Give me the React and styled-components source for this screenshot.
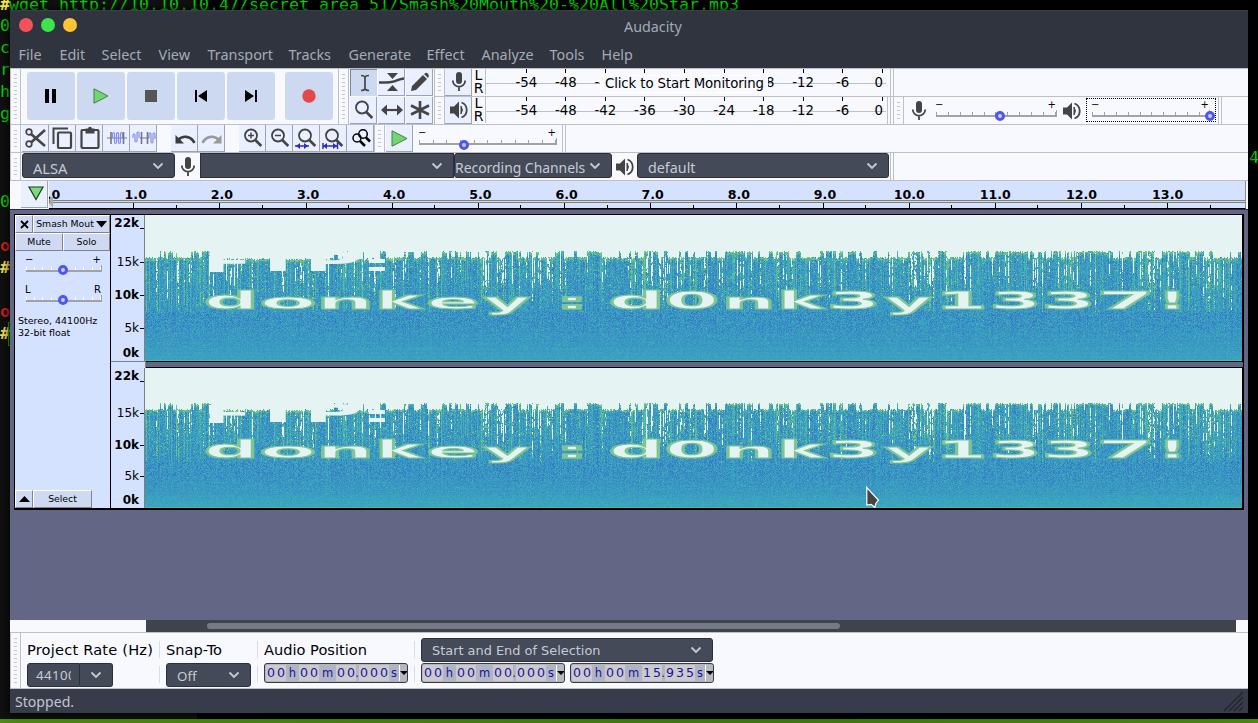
import React, { useLayoutEffect, useRef } from 'react';
import styled, { createGlobalStyle, css } from 'styled-components';

const C = {
  chrome: '#2f343f', face: '#f8f9ff', line: '#bfc0c2', button: '#eaf0ff', blue: '#cdd9f1',
  ruler: '#d5e2ff', combo: '#444a58', canvas: '#646685', ink: '#444',
};
const dejavu = '"DejaVu Sans", sans-serif';
const noto = '"Noto Sans", sans-serif';

const Global = createGlobalStyle`
  * { box-sizing: border-box; }
  body { margin: 0; background: #0b0b0b; overflow: hidden; font-family: ${dejavu}; }
  svg, canvas { display: block; }
`;

/* ---------- desktop and terminal ---------- */
const Desktop = styled.div`
  position: relative; width: 1258px; height: 723px; overflow: hidden;
  background: linear-gradient(90deg, #101010 0, #101010 197px, #000 197px);
`;
const TermLine = styled.div`
  position: absolute; left: ${p => p.$x || 0}px; top: ${p => p.$y}px;
  font: ${p => (p.$b ? 'bold ' : '')}16.61px/22px "DejaVu Sans Mono", monospace;
  color: ${p => p.$c || '#00d400'}; white-space: pre;
`;
const TermCursor = styled.div`
  position: absolute; left: 8px; top: 322px; width: 10px; height: 24px; border: 1px solid #00c800;
`;
const TmuxBar = styled.div`
  position: absolute; left: 0; top: 719px; width: 1258px; height: 4px;
  background: linear-gradient(90deg, #4e8c06, #3f7a04 60%, #4b8a06);
`;
const Window = styled.div`
  position: absolute; left: 10px; top: 10px; width: 1238px; height: 703px;
  display: flex; flex-direction: column; background: ${C.face};
  box-shadow: 0 0 8px #000;
`;

/* ---------- title and menu ---------- */
const TitleBar = styled.div`
  height: 30px; background: ${C.chrome}; border-top: 1px solid #3a3f4b;
  display: flex; align-items: center; padding: 0 9px 0; flex: none;
`;
const Dots = styled.div`display: flex; gap: 8px; width: 605px; margin-top: -1px;`;
const Dot = styled.span`width: 14px; height: 14px; border-radius: 50%; background: ${p => p.$c};`;
const Title = styled.div`font: 14.3px ${noto}; color: #a4abb7; margin-top: 2px;`;
const MenuBar = styled.div`
  height: 28px; background: ${C.chrome}; display: flex; align-items: center;
  padding-left: 8.5px; flex: none;
`;
const MenuItem = styled.div`width: ${p => p.$w}px; font: 14.4px ${noto}; color: #a4abb7; margin-top: 0;`;

/* ---------- toolbars ---------- */
const Dock = styled.div`display: flex; flex-direction: column; flex: none;`;
const Row = styled.div`
  display: flex; height: ${p => p.$h}px; border-top: ${p => (p.$plain ? 0 : 1)}px solid ${C.line};
`;
const Stack = styled.div`display: flex; flex-direction: column; width: ${p => p.$w}px;`;
const Grip = styled.div`
  width: 11px; flex: none; border-right: 1px solid ${C.line}; border-left: 1px solid ${C.line};
  padding: 5px 3px 3px 3px;
  &::before {
    content: ''; display: block; height: 100%;
    background: repeating-linear-gradient(180deg, #c6c6c6 0 1px, transparent 1px 4px);
  }
`;
const Bar = styled.div`display: flex; width: ${p => p.$w}px; flex: none;`;
const Group = styled.div`
  display: flex; flex-wrap: wrap; align-content: flex-start;
  gap: ${p => p.$gap || 0}px; padding: ${p => p.$pad || 0}; flex: none; width: ${p => p.$w ? p.$w + 'px' : 'auto'};
`;
const Spacer = styled.div`width: ${p => p.$w}px; flex: none;`;
const BarEnd = styled.div`
  width: 4px; flex: none; border-left: 1px solid ${C.line}; border-right: 1px solid ${C.line};
`;
const BigButton = styled.div`
  width: 48px; height: 48px; border-radius: 3px; background: ${C.blue}; flex: none;
  display: grid; place-items: center; margin-left: ${p => p.$ml || 0}px;
`;
const ToolButton = styled.div`
  width: 27px; height: 27px; background: ${p => (p.$on ? '#cdd9f1' : C.button)}; flex: none;
  border: 0 solid ${p => (p.$on ? '#808792' : '#9da3b2')};
  border-width: ${p => (p.$on ? '1px 0 0 1px' : '0 1px 1px 0')};
  padding: 0 0 0 1px;
  display: grid; place-items: center; overflow: hidden;
`;

/* ---------- meters ---------- */
const MeterRow = styled.div`display: flex; height: 28px; border-top: ${p => (p.$first ? 0 : 1)}px solid ${C.line};`;
const LR = styled.div`
  width: 13px; display: flex; flex-direction: column; align-items: center; font-size: 14px; line-height: 13px;
`;
const Meter = styled.div`
  position: relative; display: flex; width: 401px; height: 26px; padding-left: 20.5px;
  border-left: 1px solid ${C.line}; flex: none;
  background: linear-gradient(${C.line}, ${C.line}) 0 14px / 401px 1px no-repeat;
`;
const MeterCell = styled.div`
  width: ${p => p.$w || 39.55}px; flex: none; display: flex; flex-direction: column; align-items: ${p => (p.$w ? 'flex-end' : 'center')};
  font-size: 13.3px; line-height: 20px; color: #000;
  &::before { content: ''; width: 1px; height: 4px; background: #000; margin-bottom: 0; }
`;
const Monitoring = styled.div`
  position: absolute; left: 114px; top: 6px; width: 168px; height: 18px; background: ${C.face};
  border: 1px solid #fff; font-size: 13.3px; line-height: 15px; padding-left: 4px; white-space: nowrap; letter-spacing: -.1px;
`;

/* ---------- sliders ---------- */
const SliderBox = styled.div`
  position: relative; width: ${p => p.$w}px; height: ${p => p.$h || 22}px; margin: ${p => p.$m || 0};
  outline: ${p => (p.$focus ? '1px dotted #000' : 'none')}; outline-offset: 0;
  flex: none; padding: 0 ${p => (p.$focus ? 5 : 0)}px;
`;
const SliderEnds = styled.div`
  display: flex; justify-content: space-between; padding: 0 1px 0 0; height: 11px; font: 10px/11px ${dejavu};
  margin-left: -1px;
`;
const SliderTrack = styled.div`
  height: 7px; border-bottom: 2px solid #a2a2a2; border-right: 1px solid #a2a2a2;
  background: repeating-linear-gradient(90deg, ${p => p.$tick || '#a2a2a2'} 0 1px, transparent 1px ${p => p.$step}px) 0 2px no-repeat;
`;
const Knob = styled.div`
  position: absolute; left: ${p => p.$x}px; bottom: ${p => p.$b}px; width: 10px; height: 10px;
  border-radius: 50%; border: 3.5px solid #4b57f0; background: #ccc;
`;
function Slider({ w, knob, step, m, h, focus, ends = ['−', '+'], tick, b = 0 }) {
  return (
    <SliderBox $w={w} $h={h} $m={m} $focus={focus}>
      <SliderEnds><span>{ends[0]}</span><span>{ends[1]}</span></SliderEnds>
      <SliderTrack $step={step} $tick={tick} />
      <Knob $x={knob} $b={b} />
    </SliderBox>
  );
}

/* ---------- combos ---------- */
const ComboBox = styled.div`
  width: ${p => p.$w}px; height: ${p => p.$h || 25}px; background: ${C.combo}; border: 1px solid #2b2f3a;
  border-radius: ${p => p.$r ?? 3}px; display: flex; align-items: center; justify-content: space-between;
  padding: ${p => p.$pad || '0 10px 0 10px'}; color: #c6cbd6; font: ${p => p.$fs || 14.67}px ${p => p.$ff || noto}; flex: none;
  white-space: nowrap;
  & > span { padding-top: ${p => p.$pt ?? 4}px; }
`;
const Chevron = () => (
  <svg width="12" height="8" viewBox="0 0 12 8"><path d="M1.5 1.5 6 6l4.5-4.5" fill="none" stroke="#c6cbd6" strokeWidth="1.8" /></svg>
);
const IconCell = styled.div`width: ${p => p.$w}px; display: grid; place-items: center; flex: none;`;

/* ---------- timeline ---------- */
const Timeline = styled.div`display: flex; height: 29px; border-top: 1px solid ${C.line}; flex: none;`;
const TimeRuler = styled.div`
  position: relative; display: flex; width: 1197px; height: 28px; overflow: hidden; border-right: 1px solid #8b8d92; border-bottom: 1px solid #000;
  background:
    linear-gradient(#808080, #808080) 0 19px / 100% 1px no-repeat,
    linear-gradient(#d9d9d4, #d9d9d4) 0 20px / 100% 1px no-repeat,
    linear-gradient(#808080, #808080) 0 21px / 100% 1px no-repeat,
    ${C.ruler};
`;
const TimeCell = styled.div`
  width: 86.16px; flex: none; display: flex; flex-direction: column; align-items: center;
  justify-content: space-between; font: bold 12.6px/14px ${dejavu}; padding-top: 7px;
  background: linear-gradient(#000, #000) 100% 100% / 1px 3px no-repeat;
  & > span { padding-left: ${p => (p.$wide ? 0 : 4)}px; }
  &::after { content: ''; width: 1px; height: 5px; background: #000; }
`;
const TimeStart = styled.div`
  width: 41.7px; flex: none; display: flex; font: bold 12.6px/14px ${dejavu}; padding-top: 7px;
  & > span { margin-left: -11px; }
`;
const ScrubMark = styled.div`
  position: absolute; left: 0; bottom: 0; width: 4px; height: 13px; background: #aaa; border-left: 1px solid #777;
  clip-path: polygon(100% 0, 100% 100%, 0 60%, 0 40%);
`;

/* ---------- tracks ---------- */
const Workspace = styled.div`height: 411px; background: ${C.canvas}; border-top: 1px solid #2b2b38; padding: 4px 4px; flex: none;`;
const Track = styled.div`
  display: flex; width: 1230px; height: 296px; border: 1px solid #000; border-width: 1px 2px 2px 1px; background: ${C.canvas};
`;
const TrackPanel = styled.div`width: 96px; background: ${C.ruler}; border-right: 1px solid #000; display: flex; flex-direction: column;`;
const PanelRow = styled.div`display: flex; height: ${p => p.$h || 18}px; margin-top: ${p => p.$mt || 0}px; flex: none;`;
const PanelButton = styled.div`
  width: ${p => p.$w}px; background: #cfdaf2; border: solid; border-width: 1px; border-color: #fff #80838c #80838c #fff;
  font: 9.3px/16px ${dejavu}; display: flex; align-items: center; justify-content: center; gap: 2px; white-space: nowrap;
`;
const TrackInfo = styled.div`font: 9.5px/12px ${dejavu}; padding: 13px 0 0 3px; white-space: nowrap; flex: 1;`;
const Channels = styled.div`display: flex; flex-direction: column;`;
const Channel = styled.div`
  display: flex; height: ${p => p.$h}px;
`;
const Divider = styled.div`
  display: flex; height: 7px;
  &::before { content: ''; width: 34px; background: ${C.ruler}; border-top: 1px solid #808080; border-right: 1px solid #808080; }
  &::after { content: ''; width: 1097px; border: 1px solid #000; border-width: 1px 0; background: ${C.canvas}; }
`;
const FreqRuler = styled.div`
  width: 34px; background: ${C.ruler}; border-right: 1px solid #808080; display: flex; flex-direction: column; overflow: hidden;
`;
const FreqMark = styled.div`
  display: flex; justify-content: flex-end; gap: 1px; margin-top: ${p => p.$mt}px; height: 12px; flex: none;
  font: ${p => (p.$bold ? 'bold' : 'normal')} 12px/12px ${dejavu};
  &::after { content: ''; width: 4px; height: 1px; margin-top: ${p => p.$tick}px; background: ${p => (p.$tick ? '#000' : 'transparent')}; }
`;
const PlotFrame = styled.div`position: relative; width: 1097px; height: ${p => p.$h}px;`;
const Overlay = styled.svg`position: absolute; left: 0; top: 0;`;

const marks = [
  ['22k', 1, 11], ['15k', 0, 6], ['10k', 1, 6], ['5k', 0, 6], ['0k', 1, 0],
];

/* Glyph cells of the message: character, left and right edge in px, baseline,
   height scale, and the ink extent of the glyph in thousandths of an em. */
const ink = {
  d: [46, 626], o: [46, 641], n: [84, 633], k: [84, 671], e: [46, 639], y: [12, 639], ':': [112, 288],
  '0': [46, 650], '3': [46, 643], '1': [117, 642], '7': [65, 637], '!': [135, 316], F: [92, 590], T: [5, 677], P: [92, 690],
};
const message = [
  ['d', 207, 252, 309, 1], ['o', 263, 313, 309, .88], ['n', 323, 368, 309, .88], ['k', 381, 423, 309, 1],
  ['e', 430, 477, 309, .88], ['y', 484, 530, 309.5, .9], [':', 565, 579, 309, .88], ['d', 612, 658, 309, 1],
  ['0', 668, 716, 309, 1], ['n', 728, 770, 309, .88], ['k', 783, 825, 309, 1], ['3', 830, 877, 309, 1],
  ['y', 885, 932, 309.5, .9], ['1', 944, 984, 309, 1], ['3', 993, 1038, 309, 1], ['3', 1045, 1092, 309, 1],
  ['7', 1102, 1150, 309, 1], ['!', 1166, 1178, 309, 1],
];
const heading = [['F', 210, 246, 272, 1.05], ['T', 250, 306, 271, 1.05], ['P', 311, 358, 271, 1.05], [':', 369, 385, 271, .86]];

function Spectrogram({ h }) {
  const ref = useRef(null);
  useLayoutEffect(() => {
    const W = 1097;
    const ctx = ref.current.getContext('2d');
    const img = ctx.createImageData(W, h);
    let s = 4711;
    const rnd = () => {
      s = (s + 0x6d2b79f5) | 0;
      let t = Math.imul(s ^ (s >>> 15), 1 | s);
      t = (t + Math.imul(t ^ (t >>> 7), 61 | t)) ^ t;
      return ((t ^ (t >>> 14)) >>> 0) / 4294967296;
    };
    const stops = [[50, 108, 200], [57, 142, 196], [60, 168, 190], [76, 184, 168], [130, 202, 112], [229, 243, 243]];
    const shade = v => {
      const x = Math.max(0, Math.min(4, v));
      const i = Math.min(3, Math.floor(x));
      const f = x - i;
      return stops[i].map((a, k) => a + (stops[i + 1][k] - a) * f);
    };
    const k = h / 146;
    const cols = [];
    let on = false;
    let hot = .3;
    let hotNext = .3;
    for (let x = 0; x < W; x++) {
      const quiet = x > 62 && x < 240;
      if (rnd() < .42) on = rnd() < (quiet ? .16 : .5);
      if (rnd() < .06) hotNext = rnd();
      hot += (hotNext - hot) * .3;
      cols.push({
        spike: on,
        top: (on ? 36 : 42 + (quiet ? rnd() * 2 : 0)) + Math.floor(rnd() * 2.2),
        green: rnd() < .14 + hot * .3 ? .4 + rnd() * 1.3 : 0,
        gap: rnd() < .06 + hot * .26 ? .25 + rnd() * .75 : 0,
        len: 60 + rnd() * 40,
        tone: (rnd() - .45) * .7,
        broken: 0,
      });
    }
    for (let y = 0; y < h; y++) {
      const yy = y / k;
      const streak = (rnd() - .5) * .45;
      for (let x = 0; x < W; x++) {
        const c = cols[x];
        let rgb;
        if (yy < c.top) rgb = stops[5];
        else if (yy < 97) {
          const fade = yy < c.len ? 1 : .3 * Math.max(.3, (97 - yy) / 37);
          let v = .4 + rnd() * 1.8 + c.tone + c.green * fade * (.5 + rnd() * .8);
          if (yy < c.top + 2.5 && rnd() < .75) v += 1.9;
          if (rnd() < .05 * fade) v = 3.8;
          rgb = shade(v);
          if (c.gap) {
            if (rnd() < .4) c.broken = rnd() < (yy < 68 ? c.gap * .8 : c.gap * .2);
            if (c.broken && yy < c.len - 4) rgb = stops[5];
            else if (yy < c.len && rnd() < .4) rgb = shade(3.7);
          }
        } else {
          const t = Math.max(0, (yy - 97) / 49);
          const amp = 2.1 * (1 - t * .72);
          let v = 1.2 + t * .72 - .2 * Math.sin(t * 3.14) + (rnd() - .5) * amp + streak * t + c.tone * (1 - t) * .7;
          if (rnd() < .018 * (1 - t)) v = 3.1;
          if (y === h - 1) v = 3;
          rgb = shade(v);
        }
        const o = (y * W + x) * 4;
        img.data[o] = rgb[0]; img.data[o + 1] = rgb[1]; img.data[o + 2] = rgb[2]; img.data[o + 3] = 255;
      }
    }
    ctx.putImageData(img, 0, 0);
  }, [h]);
  const size = 25;
  const glyph = ([ch, x0, x1, base, sy], i) => {
    const [a, b] = ink[ch];
    const sx = (x1 - x0) / ((b - a) / 1000 * size);
    return (
      <text
        key={i}
        strokeWidth={ch === ':' ? 1.9 : 1.1}
        transform={`translate(${x0 - a / 1000 * size * sx} ${base}) scale(${sx} ${sy})`}
      >{ch}</text>
    );
  };
  return (
    <PlotFrame $h={h}>
      <canvas ref={ref} width={1097} height={h} />
      <Overlay width="1097" height={h} viewBox="145 215 1097 146" preserveAspectRatio="none">
        <g fontFamily="DejaVu Sans" fontWeight="bold" fontSize={size} fill="#e5f3f3">
          {heading.map(glyph)}
          <g stroke="#7fc493">{message.map(glyph)}</g>
        </g>
      </Overlay>
    </PlotFrame>
  );
}

/* ---------- bottom ---------- */
const ScrollRow = styled.div`display: flex; height: 12px; flex: none;`;
const ScrollTrack = styled.div`width: 1090px; margin-left: 136px; background: #3f434e; padding: 3px 0 3px 61px;`;
const ScrollThumb = styled.div`width: 633px; height: 6px; border-radius: 3px; background: #767a85;`;
const SelectionBar = styled.div`display: flex; height: 57px; border: 1px solid ${C.line}; border-width: 1px 0; flex: none;`;
const Field = styled.div`
  width: ${p => p.$w}px; padding: ${p => p.$pad || '7px 0 0 6px'}; display: flex; flex-direction: column; gap: ${p => p.$gap ?? 3}px; flex: none;
`;
const FieldLabel = styled.div`font: 14.6px/20px ${dejavu}; white-space: nowrap; letter-spacing: ${p => p.$ls || 0}px;`;
const VRule = styled.div`
  width: 1px; margin: 8px 0 5px; background: linear-gradient(#dcdde2 0 17px, transparent 17px 25px, #dcdde2 25px);
`;
const RateBox = styled.div`display: flex;`;
const RateText = styled.div`
  width: 53px; height: 24px; background: ${C.combo}; border: 1px solid #2b2f3a; border-radius: 3px 0 0 3px;
  color: #c6cbd6; font: 13.3px/22px ${noto}; overflow: hidden; padding-left: 8px;
  & > span { display: block; width: 35px; overflow: hidden; letter-spacing: .4px; }
`;
const RateArrow = styled.div`
  width: 33px; height: 24px; background: ${C.combo}; border: 1px solid #2b2f3a; border-left: 0; border-radius: 0 3px 3px 0;
  display: grid; place-items: center;
`;
const TimeRow = styled.div`display: flex; gap: 5px; `;
const TimeBox = styled.div`
  display: flex; width: 144px; height: 20px; border: 1px solid #3a3a40; border-radius: 3px; background: #b1b4c1;
  padding: 1px 0 1px 1px; color: #1c10a8; font: 12.6px/16px ${dejavu}; overflow: hidden;
`;
const Digit = styled.span`width: 10px; background: #cbcbcb; text-align: center; flex: none;`;
const Unit = styled.span`width: ${p => p.$w}px; text-align: center; flex: none; font-size: 11.5px; ${p => p.$dot && css`text-indent: -1px;`}`;
const TimeArrow = styled.span`
  flex: 1; background: #b6b8c4; border-left: 1px solid #fff; display: grid; place-items: center;
`;
function TimeField({ value }) {
  const units = { h: 13, m: 17, '.': 3, s: 10 };
  return (
    <TimeBox>
      {[...value].map((ch, i) => (units[ch] ? <Unit key={i} $w={units[ch]} $dot={ch === '.'}>{ch}</Unit> : <Digit key={i}>{ch}</Digit>))}
      <TimeArrow><svg width="8" height="4"><path d="M0 0h8L4 4z" /></svg></TimeArrow>
    </TimeBox>
  );
}
const StatusBar = styled.div`
  height: 24px; flex: none; background: #383c4a; color: #c0c6d2; font: 14.1px/24px ${noto}; padding: 1px 4px 0 5px;
  display: flex; justify-content: space-between; align-items: flex-start; overflow: hidden;
`;
const Pointer = styled.svg`position: absolute; left: 866px; top: 486px;`;

/* ---------- icons ---------- */
const Ico = ({ s = 24, w, h, children }) => (
  <svg width={w || s} height={h || s} viewBox={`0 0 ${w || s} ${h || s}`} fill="none" stroke={C.ink} strokeWidth="2">{children}</svg>
);
const Mic = () => (
  <Ico w={16} h={22}><rect x="5" y="1" width="6" height="12" rx="3" fill="#444" stroke="none" /><path d="M1.8 9.5a6.2 6.2 0 0 0 12.4 0M8 15.5V20" strokeWidth="1.8" /></Ico>
);
const Speaker = () => (
  <Ico w={20} h={20}><path d="M1 6.500h4l5-5v17l-5-5H1z" fill="#444" stroke="none" /><path d="M12 6v8q2.800-4 0-8z" fill="#444" strokeWidth="1" /><path d="M12.5 2.5a8 8 0 0 1 0 15" strokeWidth="1.8" /></Ico>
);
const PlayTri = ({ s = 16 }) => (
  <Ico s={s}><path d={`M1 .8 L${s - 1} ${s / 2} L1 ${s - .8}z`} fill="#72d572" stroke="#4a7f45" strokeWidth="1" /></Ico>
);
const Lens = ({ children }) => (
  <Ico s={24}><circle cx="10" cy="9.5" r="6" strokeWidth="1.8" /><path d="m14.3 14 6 6" strokeWidth="2.6" />{children}</Ico>
);
const Wave = ({ inside }) => (
  <Ico s={24}>
    <path d={inside ? 'M2 12h20' : 'M8 12h9'} stroke="#8f9ae8" strokeWidth="1.500" />
    <path
      d={inside
        ? 'M7.500 12V7.500q1-2 2 0v9q1 2 2 0v-9q1-2 2 0v9q1 2 2 0v-9q1-2 2 0V12'
        : 'M1 12V9q1-2 2 0v6q1 2 2 0V7q1-2 2 0v5M17 12V8q1-2 2 0v8q1 2 2 0V8q1-2 2 0v5'}
      stroke="#8690e6" strokeWidth="1.200"
    />
    <path d={inside ? 'M6 6v12M18.500 6v12' : 'M9.500 6v12M15.500 6v12'} stroke="#777" strokeWidth="1.600" />
  </Ico>
);
const Scissors = () => (
  <Ico s={24}><circle cx="5" cy="6" r="2.8" strokeWidth="1.7" /><circle cx="5" cy="18" r="2.8" strokeWidth="1.7" /><path d="M7 8l14 12M7 16.5 21 4" strokeWidth="2.6" /></Ico>
);
const Copy = () => (
  <Ico s={24}><path d="M2.5 18V2.5H17" strokeWidth="2" /><rect x="7" y="6.5" width="13" height="15.5" rx="1" strokeWidth="2.200" /></Ico>
);
const Paste = () => (
  <Ico s={24}><rect x="3.5" y="4" width="17" height="18" rx="1" strokeWidth="2.200" /><path d="M7.5 2.5h9v5h-9z" fill="#444" stroke="none" /><circle cx="12" cy="2.8" r="2" fill="#444" stroke="none" /></Ico>
);
const Undo = ({ flip }) => (
  <Ico s={24}>
    <g transform={flip ? 'translate(24 0) scale(-1 1)' : undefined} stroke={flip ? '#999' : '#3b3b3b'}>
      <path d="M5 14c4.500-4.800 12.500-4.500 16.500 2.800" strokeWidth="2.6" />
      <path d="M2.500 9v8.500H11z" fill={flip ? '#999' : '#3b3b3b'} stroke="none" />
    </g>
  </Ico>
);

const menus = [['File', 41], ['Edit', 42], ['Select', 57], ['View', 49], ['Transport', 81], ['Tracks', 60], ['Generate', 78], ['Effect', 55], ['Analyze', 68], ['Tools', 52], ['Help', 40]];
const dbs = ['-54', '-48', '-42', '-36', '-30', '-24', '-18', '-12', '-6'];

function MeterScale({ monitoring }) {
  return (
    <Meter>
      {dbs.map(d => <MeterCell key={d}>{d}</MeterCell>)}
      <MeterCell $w={20.5}>0</MeterCell>
      {monitoring && <Monitoring>Click to Start Monitoring</Monitoring>}
    </Meter>
  );
}

export default function App() {
  return (
    <Desktop>
      <Global />
      <TermLine $y={-6} $c="#f5e44a" $b>#</TermLine>
      <TermLine $y={-6} $x={9}>wget http://10.10.10.47/secret_area_51/Smash%20Mouth%20-%20All%20Star.mp3</TermLine>
      {[['0', 15], ['c', 37], ['r', 59], ['h', 81], ['g', 103], ['0', 191]].map(([t, y]) => <TermLine key={y} $y={y}>{t}</TermLine>)}
      <TermLine $y={235} $c="#c81e1e" $b>o</TermLine>
      <TermLine $y={257} $c="#f0dc50" $b>#</TermLine>
      <TermLine $y={301} $c="#c81e1e" $b>o</TermLine>
      <TermLine $y={323} $c="#f0dc50" $b>#</TermLine>
      <TermCursor />
      <TermLine $y={147} $x={1249}>4</TermLine>
      <TmuxBar />
      <Window>
        <TitleBar>
          <Dots><Dot $c="#f5515a" /><Dot $c="#3be54b" /><Dot $c="#fdc435" /></Dots>
          <Title>Audacity</Title>
        </TitleBar>
        <MenuBar>{menus.map(([t, w]) => <MenuItem key={t} $w={w}>{t}</MenuItem>)}</MenuBar>

        <Dock>
          <Row $h={56}>
            <Bar $w={328}>
              <Grip />
              <Group $gap={2} $pad="3px 0 0 6px">
                <BigButton><Ico s={16}><path d="M2 1h4v14H2zM9 1h4v14H9z" fill="#000" stroke="none" /></Ico></BigButton>
                <BigButton><PlayTri /></BigButton>
                <BigButton><Ico s={12}><path d="M0 0h12v12H0z" fill="#555" stroke="none" /></Ico></BigButton>
                <BigButton><Ico s={14}><path d="M1 1h2v12H1zM13 1v12L4 7z" fill="#000" stroke="none" /></Ico></BigButton>
                <BigButton><Ico s={14}><path d="M11 1h2v12h-2zM1 1v12l9-6z" fill="#000" stroke="none" /></Ico></BigButton>
                <BigButton $ml={8}><Ico s={14}><circle cx="7" cy="7" r="6.7" fill="#e54848" stroke="none" /></Ico></BigButton>
              </Group>
            </Bar>
            <Bar $w={96}>
              <Grip />
              <Group $gap={1} $w={85} $pad="0 0 0 1px">
                <ToolButton $on><Ico s={20}><path d="M6 2.500q3 0 4 1.500Q11 2.500 14 2.500M6 17.500q3 0 4-1.500 1 1.500 4 1.500M10 4v12" strokeWidth="1.7" /></Ico></ToolButton>
                <ToolButton>
                  <Ico s={26}><path d="M8 4h11l-5.5 6zM8 22h11l-5.5-6z" fill="#444" stroke="none" /><path d="M0 13.500c8 0 10 .5 14-.8S20 10 25 9.500" strokeWidth="2.400" /></Ico>
                </ToolButton>
                <ToolButton><Ico s={20}><path d="M1 19l1-5L13 3l4 4L6 18zM14 2l1.500-1q1.500-.5 2.500.7t.8 2.500L18 6z" fill="#444" stroke="none" /></Ico></ToolButton>
                <ToolButton><Lens /></ToolButton>
                <ToolButton><Ico s={22}><path d="M4 11h14" strokeWidth="2.2" /><path d="M0 11l6-5.500v11zM22 11l-6-5.500v11z" fill="#444" stroke="none" /></Ico></ToolButton>
                <ToolButton><Ico s={20}><path d="M10 1v18M1 5.500l18 9M1 14.500l18-9" strokeWidth="2.6" /></Ico></ToolButton>
              </Group>
            </Bar>
            <Stack $w={453}>
              <MeterRow $first>
                <Grip /><ToolButton><Mic /></ToolButton><LR><span>L</span><span>R</span></LR><MeterScale monitoring />
              </MeterRow>
              <MeterRow>
                <Grip /><ToolButton><Speaker /></ToolButton><LR><span>L</span><span>R</span></LR><MeterScale />
              </MeterRow>
            </Stack>
            <Stack $w={361}>
              <Row $h={28} $plain><Spacer $w={3} /><BarEnd /></Row>
              <Row $h={28}>
                <BarEnd />
                <Spacer $w={2} />
                <Grip />
                <IconCell $w={30}><Mic /></IconCell>
                <Slider w={121} step={11.9} knob={59} m="2px 0 0 2px" b={0} />
                <IconCell $w={29}><Speaker /></IconCell>
                <Slider w={128} step={11.9} knob={118} m="2px 3px 0 1px" focus b={0} />
                <BarEnd />
              </Row>
            </Stack>
          </Row>

          <Row $h={28}>
            <Grip />
            <Group $pad="0 0 0 1px">
              <ToolButton><Scissors /></ToolButton>
              <ToolButton><Copy /></ToolButton>
              <ToolButton><Paste /></ToolButton>
              <ToolButton><Wave inside /></ToolButton>
              <ToolButton><Wave /></ToolButton>
            </Group>
            <Group $pad="0 0 0 14px">
              <ToolButton><Undo /></ToolButton>
              <ToolButton><Undo flip /></ToolButton>
            </Group>
            <Group $pad="0 0 0 14px">
              <ToolButton><Lens><path d="M7 9.500h6M10 6.500v6" strokeWidth="1.500" /></Lens></ToolButton>
              <ToolButton><Lens><path d="M7 9.500h6" strokeWidth="1.500" /></Lens></ToolButton>
              <ToolButton><Lens><path d="M0 20h14" stroke="#2c2cc8" strokeWidth="1.500" /><path d="M1 20l4-3v6zM13 20l-4-3v6z" fill="#2c2cc8" stroke="none" /></Lens></ToolButton>
              <ToolButton><Lens><path d="M1 20h14M1 17v6M15.500 17v6" stroke="#2c2cc8" strokeWidth="1.500" /><path d="M1 20l4-3v6zM15 20l-4-3v6z" fill="#2c2cc8" stroke="none" /></Lens></ToolButton>
              <ToolButton><Ico s={24}><g stroke="#000" strokeWidth="1.500"><circle cx="8" cy="12" r="4" /><circle cx="14" cy="8" r="4.300" /><path d="M11 15l5 5M17 11.500l4 4" strokeWidth="2.500" /></g></Ico></ToolButton>
            </Group>
            <Grip />
            <Group $pad="0 6px 0 1px"><ToolButton><PlayTri s={17} /></ToolButton></Group>
            <Slider w={138} step={13.65} knob={40} m="2px 5px 0 0" b={-1} />
            <BarEnd />
          </Row>

          <Row $h={28}>
            <Grip />
            <Spacer $w={1} />
            <ComboBox $w={153}><span>ALSA</span><Chevron /></ComboBox>
            <IconCell $w={25}><Mic /></IconCell>
            <ComboBox $w={254} $r={0}><span /><Chevron /></ComboBox>
            <ComboBox $w={158} $fs={13.9} $pad="0 10px 0 0"><span>Recording Channels</span><Chevron /></ComboBox>
            <IconCell $w={25}><Speaker /></IconCell>
            <ComboBox $w={252} $fs={14.3}><span>default</span><Chevron /></ComboBox>
            <Spacer $w={1} />
            <BarEnd />
          </Row>
        </Dock>

        <Timeline>
          <Spacer $w={11} />
          <ToolButton><Ico s={20}><path d="M4 3h14l-7 12.500z" fill="#7bdc7b" stroke="#1d3b1d" strokeWidth="1.200" /></Ico></ToolButton>
          <Spacer $w={1} />
          <TimeRuler>
            <TimeStart><span>0.0</span></TimeStart>
            {Array.from({ length: 13 }, (_, i) => <TimeCell key={i} $wide={i > 8}><span>{i + 1}.0</span></TimeCell>)}
            <ScrubMark />
          </TimeRuler>
        </Timeline>

        <Workspace>
          <Track>
            <TrackPanel>
              <PanelRow>
                <PanelButton $w={18}><svg width="9" height="9"><path d="M1 1l7 7M8 1 1 8" stroke="#000" strokeWidth="1.800" /></svg></PanelButton>
                <PanelButton $w={77}>Smash Mout<svg width="11" height="7"><path d="M0 0h11L5.500 6.500z" /></svg></PanelButton>
              </PanelRow>
              <PanelRow><PanelButton $w={48}>Mute</PanelButton><PanelButton $w={47}>Solo</PanelButton></PanelRow>
              <Slider w={76} h={18} step={8.200} knob={32} m="3px 0 0 11px" tick="#fff" b={-3} />
              <Slider w={76} h={18} step={8.200} knob={32} m="12px 0 0 11px" ends={['L', 'R']} tick="#fff" b={-3} />
              <TrackInfo>Stereo, 44100Hz<br />32-bit float</TrackInfo>
              <PanelRow>
                <PanelButton $w={18}><svg width="11" height="6"><path d="M0 6h11L5.500 0z" /></svg></PanelButton>
                <PanelButton $w={59}>Select</PanelButton>
              </PanelRow>
            </TrackPanel>
            <Channels>
              <Channel $h={146}>
                <FreqRuler>{marks.map(([t, b, k], i) => <FreqMark key={t} $bold={b} $tick={k} $mt={[2, 27, 21, 21, 13][i]}>{t}</FreqMark>)}</FreqRuler>
                <Spectrogram h={146} />
              </Channel>
              <Divider />
              <Channel $h={140}>
                <FreqRuler>{marks.map(([t, b, k], i) => <FreqMark key={t} $bold={b} $tick={k} $mt={[2, 25, 20, 19, 12][i]}>{t}</FreqMark>)}</FreqRuler>
                <Spectrogram h={140} />
              </Channel>
            </Channels>
          </Track>
        </Workspace>

        <ScrollRow><ScrollTrack><ScrollThumb /></ScrollTrack></ScrollRow>
        <SelectionBar>
          <Grip />
          <Field $w={138}>
            <FieldLabel $ls={.2}>Project Rate (Hz)</FieldLabel>
            <RateBox><RateText><span>44100</span></RateText><RateArrow><Chevron /></RateArrow></RateBox>
          </Field>
          <VRule />
          <Field $w={97}>
            <FieldLabel>Snap-To</FieldLabel>
            <ComboBox $w={85} $h={24} $fs={13.3} $pt={2}><span>Off</span><Chevron /></ComboBox>
          </Field>
          <VRule />
          <Field $w={156}>
            <FieldLabel>Audio Position</FieldLabel>
            <TimeRow><TimeField value="00h00m00.000s" /></TimeRow>
          </Field>
          <VRule />
          <Field $w={300} $pad="5px 0 0 6px" $gap={1}>
            <ComboBox $w={292} $h={24} $fs={12.9} $ff={dejavu} $pt={0}><span>Start and End of Selection</span><Chevron /></ComboBox>
            <TimeRow><TimeField value="00h00m00.000s" /><TimeField value="00h00m15.935s" /></TimeRow>
          </Field>
        </SelectionBar>
        <StatusBar>
          <span>Stopped.</span>
          <svg width="20" height="22"><path d="M0 21 19 2M5 21 19 7M10 21l9-9M15 21l4-4" stroke="#20232c" strokeWidth="1.300" /></svg>
        </StatusBar>
      </Window>
      <Pointer width="14" height="22" viewBox="0 0 14 22"><path d="M.8 1.500v17.500l4.500-.5 3.500 3 1-4 2.500-3.500z" fill="#444" stroke="#fff" strokeWidth="1.200" /></Pointer>
    </Desktop>
  );
}
